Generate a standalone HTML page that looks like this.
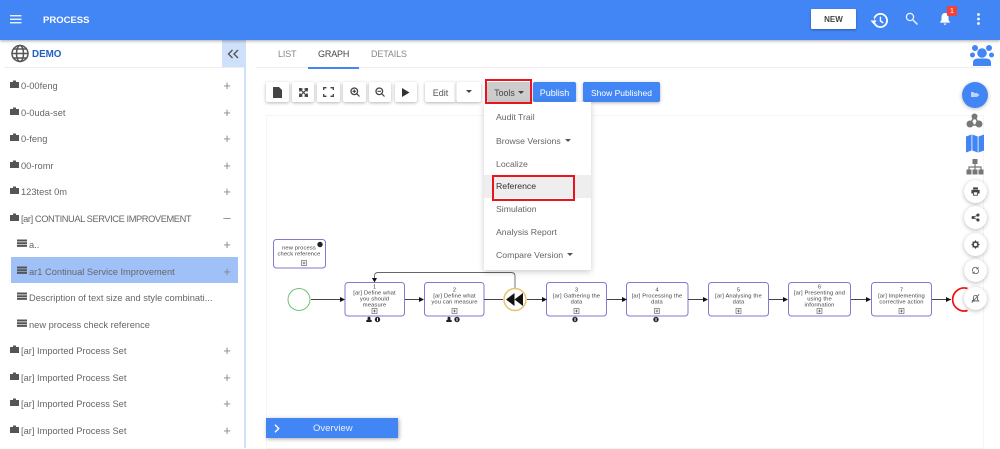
<!DOCTYPE html>
<html><head><meta charset="utf-8">
<style>
html,body{margin:0;padding:0;background:#fff;}
body{width:1000px;height:448px;overflow:hidden;position:relative;font-family:"Liberation Sans",sans-serif;color:#555;}
.a{position:absolute;}
.hdr{left:0;top:0;width:1000px;height:40px;background:#4285f4;box-shadow:0 1px 3px rgba(0,0,0,.35);z-index:5;}
.row{position:absolute;left:10px;margin-top:1px;font-size:9.3px;line-height:14px;color:#666;white-space:nowrap;}
.row svg{vertical-align:1px;margin-right:2px;}
.pl{position:absolute;left:222px;width:10px;margin-top:1px;text-align:center;font-size:13px;line-height:14px;color:#888;}
.tb{position:absolute;top:82px;height:20px;background:#fff;box-shadow:0 1px 3px rgba(0,0,0,.3);border-radius:2px;text-align:center;font-size:9px;line-height:22px;color:#555;}
.mi{position:absolute;left:496px;font-size:8.7px;line-height:12px;color:#666;white-space:nowrap;}
.car{display:inline-block;width:0;height:0;border:3px solid transparent;border-top:3px solid #555;border-bottom:0;vertical-align:2px;margin-left:3px;}
.tab{position:absolute;top:48px;font-size:9px;line-height:13px;color:#888;letter-spacing:-.15px;}
.c{position:absolute;left:963.5px;width:23px;height:23px;border-radius:50%;background:#fff;box-shadow:0 1px 4px rgba(0,0,0,.28);}
.c svg{position:absolute;left:7px;top:7px;width:9px;height:9px;}
svg text{font-family:"Liberation Sans",sans-serif;font-size:5.8px;letter-spacing:.12px;fill:#444;text-anchor:middle;}
</style></head>
<body>
<div class="a hdr"></div>
<svg class="a" style="left:10px;top:15px;z-index:6" width="12" height="9"><path d="M0 .75H11.500M0 4.250H11.500M0 7.750H11.500" stroke="#fff" stroke-width="1.300"/></svg>
<div class="a" style="left:43px;top:14px;font-size:9.500px;line-height:14px;font-weight:bold;color:#fff;z-index:6;">PROCESS</div>
<div class="a" style="left:811px;top:9px;width:45px;height:20px;background:#fff;border-radius:1px;box-shadow:0 1px 2px rgba(0,0,0,.3);font-size:8px;line-height:21px;font-weight:bold;color:#444;text-align:center;z-index:6;">NEW</div>
<svg class="a" style="left:870px;top:12px;z-index:6" width="19" height="17" viewBox="0 0 20 18"><circle cx="11" cy="9" r="7" fill="none" stroke="#fff" stroke-width="1.900"/><rect x="1" y="6" width="3.500" height="3" fill="#4285f4"/><path d="M0.500 9H7L3.800 13Z" fill="#fff"/><path d="M11 5V9.500L14 11.500" fill="none" stroke="#fff" stroke-width="1.500"/></svg>
<svg class="a" style="left:905px;top:12px;z-index:6" width="14" height="14" viewBox="0 0 14 14"><circle cx="5" cy="5" r="3.600" fill="none" stroke="#fff" stroke-opacity=".9" stroke-width="1.300"/><path d="M8 8L12.500 12.500" stroke="#fff" stroke-opacity=".9" stroke-width="1.500"/></svg>
<svg class="a" style="left:938px;top:12px;z-index:6" width="14" height="14" viewBox="0 0 14 14"><path d="M7 1C4.500 1 3.500 3 3.500 5.500V8L1.800 10.600H12.200L10.500 8V5.500C10.500 3 9.500 1 7 1Z" fill="#fff"/><path d="M5.500 11.500H8.500L7 13.200Z" fill="#fff"/></svg>
<div class="a" style="left:947px;top:6px;width:10px;height:10px;background:#f44336;color:#fff;font-size:7px;line-height:11px;text-align:center;border-radius:1px;z-index:6;">1</div>
<svg class="a" style="left:976px;top:12px;z-index:6" width="5" height="14"><circle cx="2.500" cy="2.500" r="1.400" fill="#fff"/><circle cx="2.500" cy="7" r="1.400" fill="#fff"/><circle cx="2.500" cy="11.500" r="1.400" fill="#fff"/></svg>

<!-- sidebar -->
<div class="a" style="left:244px;top:40px;width:2px;height:408px;background:#cfe0fb;"></div>
<div class="a" style="left:222px;top:40px;width:22px;height:28px;background:#cfe0fb;"></div>
<svg class="a" style="left:227px;top:49px" width="13" height="10"><path d="M5.500 1L1.500 5L5.500 9M11 1L7 5L11 9" fill="none" stroke="#555" stroke-width="1.400"/></svg>
<div class="a" style="left:4px;top:67px;width:240px;height:1px;background:#eee;"></div>
<svg class="a" style="left:10px;top:44px" width="20" height="19" viewBox="0 0 20 19"><g fill="none" stroke="#555" stroke-width="1.500"><circle cx="10" cy="9.500" r="8"/><ellipse cx="10" cy="9.500" rx="3.500" ry="8"/><path d="M2 9.500H18M3 5H17M3 14H17"/></g></svg>
<div class="a" style="left:32px;top:48px;font-size:9.800px;line-height:14px;font-weight:bold;color:#1f5fc9;">DEMO</div>

<div class="a" style="left:11px;top:257px;width:227px;height:26px;background:#a0c0f8;"></div>

<div class="row" style="top:78px"><svg width="9" height="8"><path d="M0 2H3V.5H6V2H9V8H0Z" fill="#555"/></svg>0-00feng</div><div class="pl" style="top:78px">+</div>
<div class="row" style="top:105px"><svg width="9" height="8"><path d="M0 2H3V.5H6V2H9V8H0Z" fill="#555"/></svg>0-0uda-set</div><div class="pl" style="top:105px">+</div>
<div class="row" style="top:131px"><svg width="9" height="8"><path d="M0 2H3V.5H6V2H9V8H0Z" fill="#555"/></svg>0-feng</div><div class="pl" style="top:131px">+</div>
<div class="row" style="top:158px"><svg width="9" height="8"><path d="M0 2H3V.5H6V2H9V8H0Z" fill="#555"/></svg>00-romr</div><div class="pl" style="top:158px">+</div>
<div class="row" style="top:184px"><svg width="9" height="8"><path d="M0 2H3V.5H6V2H9V8H0Z" fill="#555"/></svg>123test 0m</div><div class="pl" style="top:184px">+</div>
<div class="row" style="top:211px;letter-spacing:-.42px"><svg width="9" height="8"><path d="M0 2H3V.5H6V2H9V8H0Z" fill="#555"/></svg>[ar] CONTINUAL SERVICE IMPROVEMENT</div><div class="pl" style="top:210px">&#8211;</div>
<div class="row" style="top:237px;left:17px"><svg width="10" height="8"><path d="M0 .5H10V2.500H0ZM0 3.200H10V5.200H0ZM0 5.900H10V7.900H0Z" fill="#555"/></svg>a..</div><div class="pl" style="top:237px">+</div>
<div class="row" style="top:264px;left:17px"><svg width="10" height="8"><path d="M0 .5H10V2.500H0ZM0 3.200H10V5.200H0ZM0 5.900H10V7.900H0Z" fill="#555"/></svg>ar1 Continual Service Improvement</div><div class="pl" style="top:264px">+</div>
<div class="row" style="top:290px;left:17px"><svg width="10" height="8"><path d="M0 .5H10V2.500H0ZM0 3.200H10V5.200H0ZM0 5.900H10V7.900H0Z" fill="#555"/></svg>Description of text size and style combinati...</div>
<div class="row" style="top:317px;left:17px"><svg width="10" height="8"><path d="M0 .5H10V2.500H0ZM0 3.200H10V5.200H0ZM0 5.900H10V7.900H0Z" fill="#555"/></svg>new process check reference</div>
<div class="row" style="top:343px"><svg width="9" height="8"><path d="M0 2H3V.5H6V2H9V8H0Z" fill="#555"/></svg>[ar] Imported Process Set</div><div class="pl" style="top:343px">+</div>
<div class="row" style="top:370px"><svg width="9" height="8"><path d="M0 2H3V.5H6V2H9V8H0Z" fill="#555"/></svg>[ar] Imported Process Set</div><div class="pl" style="top:370px">+</div>
<div class="row" style="top:396px"><svg width="9" height="8"><path d="M0 2H3V.5H6V2H9V8H0Z" fill="#555"/></svg>[ar] Imported Process Set</div><div class="pl" style="top:396px">+</div>
<div class="row" style="top:423px"><svg width="9" height="8"><path d="M0 2H3V.5H6V2H9V8H0Z" fill="#555"/></svg>[ar] Imported Process Set</div><div class="pl" style="top:423px">+</div>

<!-- tabs -->
<div class="tab" style="left:278px">LIST</div>
<div class="tab" style="left:318px;color:#444">GRAPH</div>
<div class="tab" style="left:371px">DETAILS</div>
<div class="a" style="left:256px;top:67px;width:735px;height:1px;background:#eee;"></div>
<div class="a" style="left:308px;top:67px;width:51px;height:1.500px;background:#4285f4;"></div>

<!-- people -->
<svg class="a" style="left:970px;top:44px" width="24" height="23" viewBox="0 0 24 23"><g fill="#4285f4"><circle cx="5" cy="4" r="3"/><circle cx="19" cy="4" r="3"/><circle cx="2.500" cy="11" r="2.500"/><circle cx="21.500" cy="11" r="2.500"/><circle cx="12" cy="9" r="5.200" stroke="#fff" stroke-width=".8"/><path d="M3 22V18.500C3 15.500 5.500 14.500 8 14.500H16C18.500 14.500 21 15.500 21 18.500V22Z"/></g></svg>

<!-- canvas -->
<div class="a" style="left:266px;top:115px;width:716px;height:332px;border:1px solid #f5f5f5;"></div>

<!-- toolbar -->
<div class="tb" style="left:266px;width:23px"><svg width="9" height="11" style="margin-top:5px"><path d="M0 0H6L9 3V11H0Z" fill="#444"/></svg></div>
<div class="tb" style="left:292px;width:22px"><svg width="9" height="9" style="margin-top:6px"><path d="M0 0L3 1 1 3ZM9 0L6 1 8 3ZM0 9L1 6 3 8ZM9 9L6 8 8 6ZM2 2L7 7M7 2L2 7" fill="#444" stroke="#444" stroke-width="1.200"/></svg></div>
<div class="tb" style="left:317px;width:23px"><svg width="11" height="10" style="margin-top:5px"><path d="M.7 3V.7H3.500M7.500 .7H10.300V3M.7 7V9.300H3.500M7.500 9.300H10.300V7" fill="none" stroke="#444" stroke-width="1.300"/></svg></div>
<div class="tb" style="left:343px;width:23px"><svg width="10" height="10" style="margin-top:5px"><circle cx="4.300" cy="4.300" r="3.300" fill="none" stroke="#444" stroke-width="1.300"/><path d="M6.800 6.800L9.500 9.500M2.500 4.300H6M4.300 2.500V6" stroke="#444" stroke-width="1.200"/></svg></div>
<div class="tb" style="left:369px;width:22px"><svg width="10" height="10" style="margin-top:5px"><circle cx="4.300" cy="4.300" r="3.300" fill="none" stroke="#444" stroke-width="1.300"/><path d="M6.800 6.800L9.500 9.500M2.500 4.300H6" stroke="#444" stroke-width="1.200"/></svg></div>
<div class="tb" style="left:395px;width:22px"><svg width="8" height="9" style="margin-top:6px"><path d="M0 0L7.500 4.500 0 9Z" fill="#333"/></svg></div>
<div class="tb" style="left:425px;width:31px">Edit</div>
<div class="tb" style="left:456px;width:25px;border-left:1px solid #eee;box-sizing:border-box;line-height:20px"><span class="car" style="margin:0;border-width:3.500px;border-bottom:0;border-top-color:#444"></span></div>
<div class="tb" style="left:487px;width:44px;background:#ccc;box-shadow:none;color:#444;font-size:8.800px">Tools<span class="car" style="border-top-color:#444"></span></div>
<div class="tb" style="left:533px;width:43px;background:#4285f4;color:#fff">Publish</div>
<div class="tb" style="left:583px;width:77px;background:#4285f4;color:#fff;font-size:8.500px">Show Published</div>
<div class="a" style="left:485px;top:79px;width:43px;height:21px;border:2px solid #e8141f;z-index:4;"></div>

<!-- diagram -->
<svg class="a" style="left:0;top:0" width="1000" height="448" viewBox="0 0 1000 448">
<defs><g id="pm"><rect x="-2.500" y="-2.500" width="5" height="5" fill="#fff" stroke="#555" stroke-width=".6"/><path d="M-1.500 0H1.500M0 -1.500V1.500" stroke="#333" stroke-width=".6"/></g>
<g id="inf"><circle r="2.700" fill="#222"/><rect x="-.5" y="-1.700" width="1" height="3.400" fill="#fff"/></g>
<g id="usr"><circle cy="-1.300" r="1.500" fill="#222"/><path d="M-2.700 2.500V1C-2.700 .2 -1.500 0 0 0S2.700 .2 2.700 1V2.500Z" fill="#222"/></g></defs>
<g fill="#fff" stroke="#7f7bd0" stroke-width="1">
<rect x="273.500" y="239.500" width="52" height="28.500" rx="3"/>
<rect x="345" y="282.500" width="59.500" height="33.500" rx="3"/>
<rect x="424.500" y="282.500" width="59.500" height="33.500" rx="3"/>
<rect x="546.500" y="282.500" width="60" height="33.500" rx="3"/>
<rect x="626.500" y="282.500" width="61.500" height="33.500" rx="3"/>
<rect x="708.500" y="282.500" width="60" height="33.500" rx="3"/>
<rect x="788.500" y="282.500" width="62" height="33.500" rx="3"/>
<rect x="871.500" y="282.500" width="60" height="33.500" rx="3"/>
</g>
<circle cx="299" cy="299.500" r="11" fill="#fff" stroke="#6fc276" stroke-width="1"/>
<g stroke="#444" stroke-width=".9" fill="none">
<path d="M311 299.500H343M405 299.500H422M484 299.500H503M527 299.500H545M607 299.500H625M688 299.500H707M769 299.500H787M851 299.500H870M932 299.500H951"/>
<path d="M515 288V276Q515 272.500 511 272.500H378Q374.500 272.500 374.500 276V281" stroke="#666"/>
</g>
<g fill="#111">
<path d="M345 299.500L340 297V302ZM424 299.500L419 297V302ZM547 299.500L542 297V302ZM627 299.500L622 297V302ZM708 299.500L703 297V302ZM788 299.500L783 297V302ZM871 299.500L866 297V302ZM951 299.500L946 297V302ZM374.500 282.500L372 278H377Z"/>
</g>
<circle cx="515" cy="299.500" r="11" fill="#fff" stroke="#e8c26e" stroke-width="1.500"/>
<path d="M514.500 293V306L506 299.500ZM523 293V306L514.500 299.500Z" fill="#111"/>
<path d="M967.500 288.500A11.500 11.500 0 1 0 967.500 310.500" fill="none" stroke="#f01010" stroke-width="1.700"/>
<text x="299" y="249.300">new process</text><text x="299" y="255.300">check reference</text>
<use href="#pm" x="304" y="263"/><circle cx="320" cy="244.500" r="2.700" fill="#222"/>
<text x="374.500" y="288.500">1</text><text x="374.500" y="294.500">[ar] Define what</text><text x="374.500" y="300.500">you should</text><text x="374.500" y="306.500">measure</text><use href="#pm" x="374.500" y="311"/>
<text x="454.500" y="291.500">2</text><text x="454.500" y="297.500">[ar] Define what</text><text x="454.500" y="303.500">you can measure</text><use href="#pm" x="454.500" y="311"/>
<text x="576.500" y="291.500">3</text><text x="576.500" y="297.500">[ar] Gathering the</text><text x="576.500" y="303.500">data</text><use href="#pm" x="576.500" y="311"/>
<text x="657" y="291.500">4</text><text x="657" y="297.500">[ar] Processing the</text><text x="657" y="303.500">data</text><use href="#pm" x="657" y="311"/>
<text x="738.500" y="291.500">5</text><text x="738.500" y="297.500">[ar] Analysing the</text><text x="738.500" y="303.500">data</text><use href="#pm" x="738.500" y="311"/>
<text x="819.500" y="288.500">6</text><text x="819.500" y="294.500">[ar] Presenting and</text><text x="819.500" y="300.500">using the</text><text x="819.500" y="306.500">information</text><use href="#pm" x="819.500" y="311"/>
<text x="901.500" y="291.500">7</text><text x="901.500" y="297.500">[ar] Implementing</text><text x="901.500" y="303.500">corrective action</text><use href="#pm" x="901.500" y="311"/>
<use href="#usr" x="369" y="319.500"/><use href="#inf" x="377.500" y="319.500"/>
<use href="#usr" x="449" y="319.500"/><use href="#inf" x="457" y="319.500"/>
<use href="#inf" x="575" y="319.500"/><use href="#inf" x="656" y="319.500"/>
</svg>

<!-- dropdown -->
<div class="a" style="left:484px;top:102px;width:107px;height:168px;background:#fff;box-shadow:0 2px 6px rgba(0,0,0,.2);"></div>
<div class="a" style="left:484px;top:175px;width:107px;height:23px;background:#eee;"></div>
<div class="mi" style="top:111px">Audit Trail</div>
<div class="mi" style="top:135px">Browse Versions<span class="car" style="margin-left:4px"></span></div>
<div class="mi" style="top:158px">Localize</div>
<div class="mi" style="top:180px;color:#333">Reference</div>
<div class="mi" style="top:203px">Simulation</div>
<div class="mi" style="top:226px">Analysis Report</div>
<div class="mi" style="top:249px">Compare Version<span class="car" style="margin-left:4px"></span></div>
<div class="a" style="left:492px;top:175px;width:79px;height:22px;border:2px solid #e8141f;"></div>

<!-- overview -->
<div class="a" style="left:266px;top:418px;width:132px;height:20px;background:#4285f4;box-shadow:1px 1px 4px rgba(0,0,0,.35);color:#e8f0fe;font-size:9.500px;line-height:20px;"><span style="position:absolute;left:47px;top:.5px;">Overview</span><svg style="position:absolute;left:8px;top:6px" width="6" height="9"><path d="M1 .8L4.700 4.500L1 8.200" fill="none" stroke="#fff" stroke-width="1.400"/></svg></div>

<!-- right rail -->
<div class="a" style="left:962px;top:82px;width:26px;height:26px;border-radius:50%;background:#4285f4;box-shadow:0 1px 4px rgba(0,0,0,.25);"><svg style="position:absolute;left:9px;top:10px" width="9" height="6"><path d="M0 0H3V1H6L8.500 3L6 5H0Z" fill="#bcd3fb"/></svg></div>
<svg class="a" style="left:966px;top:112px" width="18" height="17" viewBox="0 0 18 17"><g fill="#777"><circle cx="8.500" cy="4.500" r="3"/><circle cx="4" cy="12" r="3.500"/><circle cx="13" cy="12" r="3.500"/></g><path d="M7.500 6L4.500 11M9.500 6L12.500 11M6 13H11" stroke="#777" stroke-width="1.500"/></svg>
<svg class="a" style="left:966px;top:134px" width="18" height="20" viewBox="0 0 18 20"><path d="M0 2.500L5.500 .5V16.500L0 18.500ZM6.300 .5L11.700 2.500V18.500L6.300 16.500ZM12.500 2.500L18 .5V16.500L12.500 18.500Z" fill="#4285f4"/></svg>
<svg class="a" style="left:966px;top:159px" width="18" height="16" viewBox="0 0 18 16"><g fill="#777"><rect x="6.500" y="0" width="5" height="5"/><rect x="0.500" y="10.500" width="5" height="5"/><rect x="6.500" y="10.500" width="5" height="5"/><rect x="12.500" y="10.500" width="5" height="5"/></g><path d="M9 5V10.500M3 10.500V8H15V10.500" fill="none" stroke="#777" stroke-width="1.200"/></svg>

<div class="c" style="top:179.500px"><svg viewBox="0 0 11 11"><path d="M2.500 .5H8.500V3H2.500ZM.5 3.500H10.500V8H8.500V10.500H2.500V8H.5Z" fill="#444"/><rect x="3.500" y="6.500" width="4" height="3" fill="#fff"/></svg></div>
<div class="c" style="top:205.500px"><svg viewBox="0 0 11 11"><circle cx="8.500" cy="2.500" r="1.900" fill="#444"/><circle cx="8.500" cy="8.500" r="1.900" fill="#444"/><circle cx="2.500" cy="5.500" r="1.900" fill="#444"/><path d="M8.500 2.500L2.500 5.500L8.500 8.500" fill="none" stroke="#444"/></svg></div>
<div class="c" style="top:232.500px"><svg viewBox="0 0 11 11"><circle cx="5.500" cy="5.500" r="3" fill="none" stroke="#444" stroke-width="2"/><path d="M5.500 .5V2M5.500 9V10.500M.5 5.500H2M9 5.500H10.500M2 2L3 3M8 8L9 9M9 2L8 3M3 8L2 9" stroke="#444" stroke-width="1.300"/></svg></div>
<div class="c" style="top:258.500px"><svg viewBox="0 0 11 11"><path d="M2 6.500A3.500 3.500 0 0 1 8 3M9 4.500A3.500 3.500 0 0 1 3 8" fill="none" stroke="#555"/><path d="M9 1V4H6ZM2 10V7H5Z" fill="#555"/></svg></div>
<div class="c" style="top:286.500px"><svg viewBox="0 0 11 11"><path d="M5.500 1.500C3.500 1.500 3 3.500 3 5V7L1.500 8.500H9.500L8 7V5C8 3.500 7.500 1.500 5.500 1.500Z" fill="none" stroke="#555"/><path d="M1 10.500L10 .5" stroke="#555"/></svg></div>
</body></html>
